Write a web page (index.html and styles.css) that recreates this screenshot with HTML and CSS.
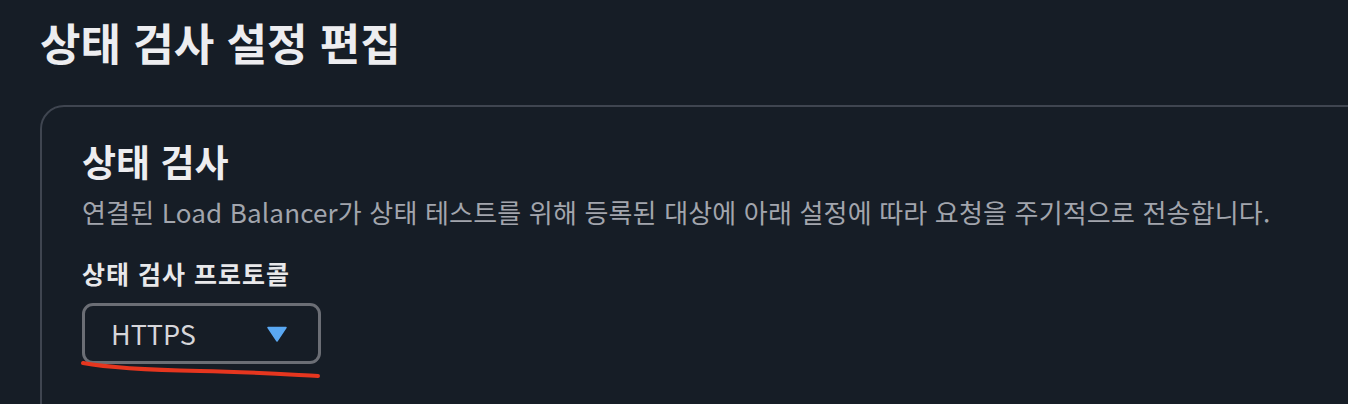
FILE: index.html
```html
<!DOCTYPE html>
<html lang="ko">
<head>
<meta charset="utf-8">
<link rel="stylesheet" href="styles.css">
</head>
<body>
<main class="page">
  <h1 class="page-title">상태 검사 설정 편집</h1>
  <section class="card">
    <h2 class="card-title">상태 검사</h2>
    <p class="card-desc">연결된 Load Balancer가 상태 테스트를 위해 등록된 대상에 아래 설정에 따라 요청을 주기적으로 전송합니다.</p>
    <div class="field">
      <label class="field-label">상태 검사 프로토콜</label>
      <div class="select-wrap">
        <div class="select">
          <span class="select-value">HTTPS</span>
          <svg class="caret" width="20" height="16" viewBox="0 0 20 16"><path d="M1 1.5 H19 L10 15 Z" fill="#5aa8f2" stroke="#5aa8f2" stroke-width="1.5" stroke-linejoin="round"/></svg>
        </div>
        <svg class="annot" width="250" height="24" viewBox="0 0 250 24"><path d="M3 3 C 30 8, 70 10, 120 11 S 200 14, 238 16" fill="none" stroke="#e6361f" stroke-width="4" stroke-linecap="round"/></svg>
      </div>
    </div>
  </section>
</main>
</body>
</html>
```

FILE: styles.css
```css
* { box-sizing: border-box; }
html, body { margin: 0; padding: 0; }
body {
  background: #161d26;
  font-family: "Noto Sans CJK KR", "Noto Sans", sans-serif;
  color: #eeeef0;
  width: 1348px;
  height: 404px;
  overflow: hidden;
}
.page {
  padding: 14px 0 0 40px;
}
.page-title {
  margin: 0;
  font-size: 44px;
  font-weight: 700;
  line-height: 56px;
  color: #ededf0;
}
.card {
  margin-top: 35px;
  width: 1400px;
  height: 400px;
  border: 2px solid #3f4550;
  border-radius: 24px;
  padding: 32px 0 0 40px;
}
.card-title {
  margin: 0;
  font-size: 37px;
  font-weight: 700;
  line-height: 44px;
  color: #ededf0;
}
.card-desc {
  margin: 12px 0 0;
  font-size: 26px;
  letter-spacing: 0.17px;
  line-height: 34px;
  color: #a2a5ad;
}
.field { margin-top: 27px; }
.field-label {
  display: block;
  font-size: 25px;
  letter-spacing: 1px;
  font-weight: 700;
  line-height: 34px;
  color: #e8e8ea;
}
.select-wrap {
  position: relative;
  margin-top: 13px;
  width: 239px;
}
.select {
  height: 61px;
  border: 3px solid #6b6e75;
  border-radius: 11px;
  display: flex;
  align-items: center;
  justify-content: space-between;
  padding: 0 31px 0 26px;
}
.select-value {
  font-size: 27px;
  color: #d6d6da;
}
.caret { display: block; }
.annot {
  position: absolute;
  left: -2px;
  top: 57px;
}
```
